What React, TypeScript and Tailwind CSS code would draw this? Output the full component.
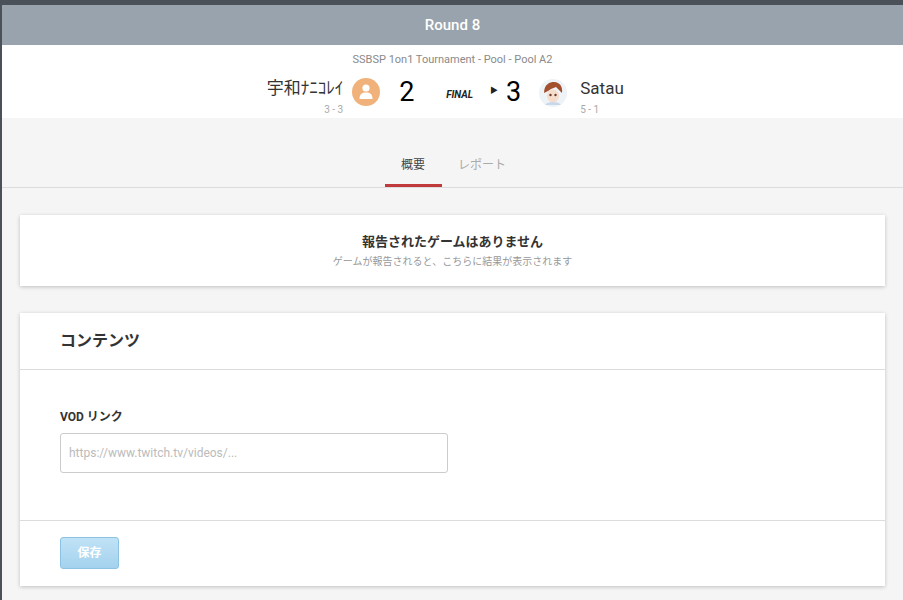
import React from "react";

const font = { fontFamily: 'Roboto, "Noto Sans CJK JP", sans-serif' };

const App = () => {
  return (
    <div className="w-[903px] h-[600px] overflow-hidden bg-[#4b5159] pt-[5px] pl-[2px]" style={font}>
      <div className="h-[595px] bg-[#f5f5f5] rounded-tl-[2px] overflow-hidden">
        {/* Header */}
        <div className="h-10 bg-[#99a3ad] flex items-center justify-center text-white text-[15px] font-medium">
          Round 8
        </div>

        {/* Match summary */}
        <div className="bg-white h-[73px] pt-[7px]">
          <div className="text-center text-[11px] text-[#8a8a8a]">SSBSP 1on1 Tournament - Pool - Pool A2</div>
          <div className="flex items-start justify-center mt-[9px] ml-[-20px]">
            <div className="flex flex-col items-end w-[82px]">
              <span className="text-[17px] leading-5 text-[#333] whitespace-nowrap">宇和ﾅﾆｺﾚｲ</span>
              <span className="text-[10px] text-[#aaa] mt-[4px]">3 - 3</span>
            </div>
            <div className="ml-[9px] w-[28px] h-[28px] rounded-full bg-[#f0b27a] flex items-center justify-center">
              <svg width="14" height="15" viewBox="0 0 14 15" fill="white">
                <circle cx="7" cy="4" r="3.6" />
                <path d="M0.5 15 C0.5 10 3 8.5 7 8.5 C11 8.5 13.5 10 13.5 15 Z" />
              </svg>
            </div>
            <span className="ml-[19px] text-[27px] leading-7 text-black w-[20px]">2</span>
            <span className="ml-[27px] mt-[9px] text-[10px] font-bold italic text-[#222]">FINAL</span>
            <span className="ml-[17px] mt-[7px] text-[8px] text-[#222]">▶</span>
            <span className="ml-[8px] text-[27px] leading-7 text-black">3</span>
            <div className="ml-[18px] w-[28px] h-[28px] rounded-full bg-[#eef3f7] overflow-hidden mt-[1px]">
              <svg width="28" height="28" viewBox="0 0 28 28">
                <path d="M5 14 C5 5 11 3 15 3 C21 3 24 8 23 14 L20 11 L17 8 L12 10 L9 12 Z" fill="#a3502e" />
                <ellipse cx="14" cy="17" rx="6" ry="6.5" fill="#f6dccb" />
                <circle cx="11.5" cy="16" r="1.2" fill="#6b3a2a" />
                <circle cx="16.5" cy="16" r="1.2" fill="#6b3a2a" />
                <path d="M6 26 C8 22 20 22 22 26 Z" fill="#c9d8e8" />
              </svg>
            </div>
            <div className="ml-[13px] flex flex-col">
              <span className="text-[17px] leading-5 text-[#333]">Satau</span>
              <span className="text-[10px] text-[#aaa] mt-[4px]">5 - 1</span>
            </div>
          </div>
        </div>

        {/* Tabs */}
        <div className="border-b border-[#dcdcdc] flex justify-center pt-[38px] ml-[-6px]">
          <div className="w-[57px] text-center text-[12px] text-[#444] pb-[10px] border-b-[3px] border-[#c0393b]">概要</div>
          <div className="ml-[8px] w-[65px] text-center text-[12px] text-[#aaa] pb-[10px]">レポート</div>
        </div>

        <div className="px-[18px] pt-[27px]">
          {/* No games card */}
          <div className="bg-white h-[71px] shadow-[0_1px_4px_rgba(0,0,0,0.22)] flex flex-col items-center justify-center">
            <div className="text-[13px] font-bold text-[#333]">報告されたゲームはありません</div>
            <div className="text-[10px] text-[#999] mt-[2px]">ゲームが報告されると、こちらに結果が表示されます</div>
          </div>

          {/* Content card */}
          <div className="bg-white mt-[27px] h-[273px] shadow-[0_1px_4px_rgba(0,0,0,0.22)]">
            <div className="h-[57px] border-b border-[#dcdcdc] flex items-center px-10 text-[16px] font-bold text-[#333]">
              コンテンツ
            </div>
            <div className="h-[151px] border-b border-[#dcdcdc] px-10 pt-[38px]">
              <div className="text-[12px] font-bold text-[#333]">VOD リンク</div>
              <input
                className="mt-[7px] w-[388px] h-[40px] border border-[#ccc] rounded-[3px] px-2 text-[12px] outline-none placeholder:text-[#bbb]"
                placeholder="https://www.twitch.tv/videos/..."
              />
            </div>
            <div className="px-10 pt-[16px]">
              <button className="w-[59px] h-[32px] rounded-[3px] border border-[#8cc2e2] bg-gradient-to-b from-[#c0e2f6] to-[#a4d2ee] text-white text-[12px] font-bold">
                保存
              </button>
            </div>
          </div>
        </div>
      </div>
    </div>
  );
};

export default App;
